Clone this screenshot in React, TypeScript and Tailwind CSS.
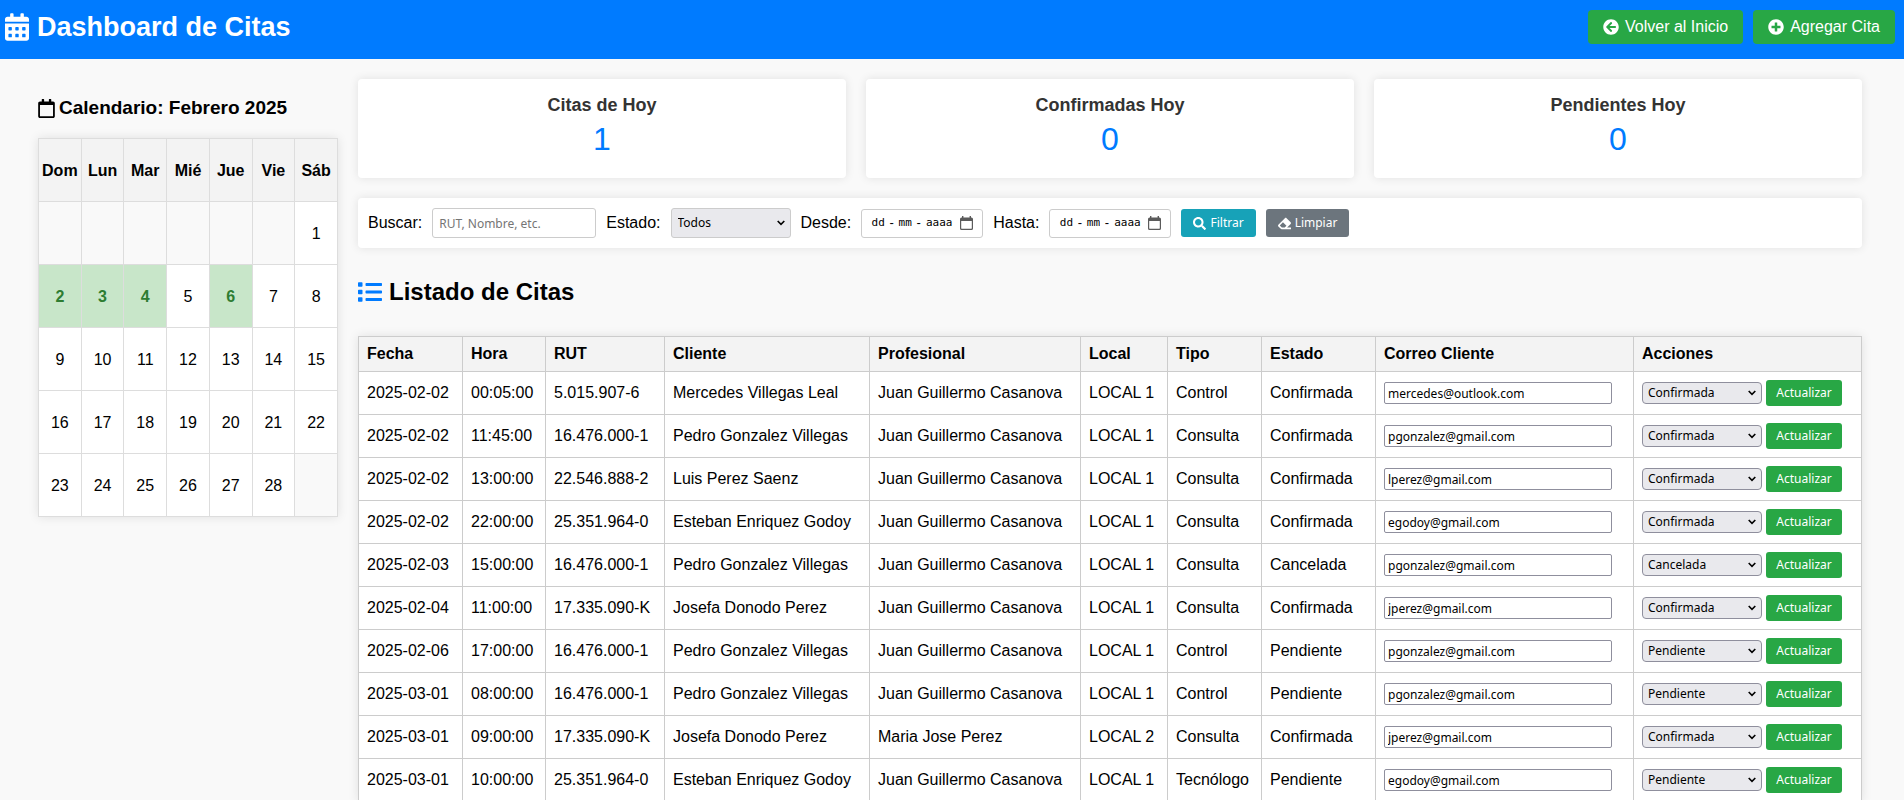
import { useId } from "react";
import {
  FaArrowCircleLeft,
  FaCalendarAlt,
  FaEraser,
  FaList,
  FaPlusCircle,
  FaRegCalendar,
  FaSearch,
} from "react-icons/fa";

type Cita = {
  fecha: string;
  hora: string;
  rut: string;
  cliente: string;
  profesional: string;
  local: string;
  tipo: string;
  estado: string;
  correo: string;
};

const JUAN = "Juan Guillermo Casanova";

const citas: Cita[] = [
  { fecha: "2025-02-02", hora: "00:05:00", rut: "5.015.907-6", cliente: "Mercedes Villegas Leal", profesional: JUAN, local: "LOCAL 1", tipo: "Control", estado: "Confirmada", correo: "mercedes@outlook.com" },
  { fecha: "2025-02-02", hora: "11:45:00", rut: "16.476.000-1", cliente: "Pedro Gonzalez Villegas", profesional: JUAN, local: "LOCAL 1", tipo: "Consulta", estado: "Confirmada", correo: "pgonzalez@gmail.com" },
  { fecha: "2025-02-02", hora: "13:00:00", rut: "22.546.888-2", cliente: "Luis Perez Saenz", profesional: JUAN, local: "LOCAL 1", tipo: "Consulta", estado: "Confirmada", correo: "lperez@gmail.com" },
  { fecha: "2025-02-02", hora: "22:00:00", rut: "25.351.964-0", cliente: "Esteban Enriquez Godoy", profesional: JUAN, local: "LOCAL 1", tipo: "Consulta", estado: "Confirmada", correo: "egodoy@gmail.com" },
  { fecha: "2025-02-03", hora: "15:00:00", rut: "16.476.000-1", cliente: "Pedro Gonzalez Villegas", profesional: JUAN, local: "LOCAL 1", tipo: "Consulta", estado: "Cancelada", correo: "pgonzalez@gmail.com" },
  { fecha: "2025-02-04", hora: "11:00:00", rut: "17.335.090-K", cliente: "Josefa Donodo Perez", profesional: JUAN, local: "LOCAL 1", tipo: "Consulta", estado: "Confirmada", correo: "jperez@gmail.com" },
  { fecha: "2025-02-06", hora: "17:00:00", rut: "16.476.000-1", cliente: "Pedro Gonzalez Villegas", profesional: JUAN, local: "LOCAL 1", tipo: "Control", estado: "Pendiente", correo: "pgonzalez@gmail.com" },
  { fecha: "2025-03-01", hora: "08:00:00", rut: "16.476.000-1", cliente: "Pedro Gonzalez Villegas", profesional: JUAN, local: "LOCAL 1", tipo: "Control", estado: "Pendiente", correo: "pgonzalez@gmail.com" },
  { fecha: "2025-03-01", hora: "09:00:00", rut: "17.335.090-K", cliente: "Josefa Donodo Perez", profesional: "Maria Jose Perez", local: "LOCAL 2", tipo: "Consulta", estado: "Confirmada", correo: "jperez@gmail.com" },
  { fecha: "2025-03-01", hora: "10:00:00", rut: "25.351.964-0", cliente: "Esteban Enriquez Godoy", profesional: JUAN, local: "LOCAL 1", tipo: "Tecnólogo", estado: "Pendiente", correo: "egodoy@gmail.com" },
];

const columnas = [
  { titulo: "Fecha", ancho: "w-[104px]" },
  { titulo: "Hora", ancho: "w-[83px]" },
  { titulo: "RUT", ancho: "w-[119px]" },
  { titulo: "Cliente", ancho: "w-[205px]" },
  { titulo: "Profesional", ancho: "w-[211px]" },
  { titulo: "Local", ancho: "w-[87px]" },
  { titulo: "Tipo", ancho: "w-[94px]" },
  { titulo: "Estado", ancho: "w-[114px]" },
  { titulo: "Correo Cliente", ancho: "w-[258px]" },
  { titulo: "Acciones", ancho: "w-[228px]" },
];

const diasSemana = ["Dom", "Lun", "Mar", "Mié", "Jue", "Vie", "Sáb"];
const semanas: (number | null)[][] = [
  [null, null, null, null, null, null, 1],
  [2, 3, 4, 5, 6, 7, 8],
  [9, 10, 11, 12, 13, 14, 15],
  [16, 17, 18, 19, 20, 21, 22],
  [23, 24, 25, 26, 27, 28, null],
];
const diasConCita = new Set([2, 3, 4, 6]);

const estados = ["Pendiente", "Confirmada", "Cancelada"];

function claseDia(dia: number | null) {
  if (dia === null) return "bg-[#f9f9f9]";
  if (diasConCita.has(dia)) return "bg-[#c8e6c9] font-bold text-[#2e7d32]";
  return "bg-white";
}

function Flecha() {
  return (
    <svg viewBox="0 0 8 6" className="pointer-events-none absolute top-1/2 right-[6px] h-[6px] w-2 -translate-y-1/2" fill="none" stroke="black" strokeWidth="1.6">
      <path d="M0.7 1 L4 4.4 L7.3 1" />
    </svg>
  );
}

function Calendario() {
  return (
    <aside className="w-[300px] shrink-0">
      <h3 className="mt-[18px] mb-[19px] flex items-center gap-1 text-[19px] leading-[22px] font-bold">
        <FaRegCalendar className="h-[19px] w-[17px]" />
        Calendario: Febrero 2025
      </h3>
      <table className="w-full table-fixed border-collapse text-center shadow-[0_0_10px_rgba(0,0,0,0.1)]">
        <thead>
          <tr className="h-[63px] bg-[#f3f3f3]">
            {diasSemana.map((d) => (
              <th key={d} className="border border-[#ddd] px-0 pt-0.5 pb-0">{d}</th>
            ))}
          </tr>
        </thead>
        <tbody>
          {semanas.map((semana, i) => (
            <tr key={i} className="h-[63px]">
              {semana.map((dia, j) => (
                <td key={j} className={`border border-[#ddd] px-0 pt-0.5 pb-0 ${claseDia(dia)}`}>{dia}</td>
              ))}
            </tr>
          ))}
        </tbody>
      </table>
    </aside>
  );
}

function Resumen({ titulo, valor }: { titulo: string; valor: number }) {
  return (
    <div className="flex-1 rounded-[4px] bg-white pt-[15px] pb-[20px] text-center shadow-[0_0_10px_rgba(0,0,0,0.1)]">
      <h3 className="text-[18px] leading-[22px] font-bold text-[#333]">{titulo}</h3>
      <p className="mt-[5px] text-[32px] leading-[37px] text-[#007bff]">{valor}</p>
    </div>
  );
}

const parteFecha =
  "p-0 text-center font-['DejaVu_Sans_Mono',monospace] text-[11px] text-black outline-none placeholder:text-black";

function CampoFecha({ etiqueta }: { etiqueta: string }) {
  const id = useId();
  return (
    <>
      <label htmlFor={id}>{etiqueta}</label>
      <div className="flex h-[29px] items-center gap-1 rounded-[3px] border border-[#ccc] bg-white px-[9px]">
        <input id={id} placeholder="dd" className={`w-[14px] ${parteFecha}`} />
        <span className="w-[5px] text-center text-[13px]">-</span>
        <input aria-label={`${etiqueta} mes`} placeholder="mm" className={`w-[14px] ${parteFecha}`} />
        <span className="w-[5px] text-center text-[13px]">-</span>
        <input aria-label={`${etiqueta} año`} placeholder="aaaa" className={`w-[28px] ${parteFecha}`} />
        <button type="button" aria-label={`${etiqueta} abrir calendario`} className="ml-[3px]">
          <svg viewBox="0 0 13 14" className="block h-[14px] w-[13px]" fill="#5b5b5b">
            <path fillRule="evenodd" d="M2 0h1.400v1.400h6.200V0H11v1.400h.4A1.600 1.600 0 0 1 13 3v9.400a1.600 1.600 0 0 1-1.600 1.600H1.600A1.600 1.600 0 0 1 0 12.400V3a1.600 1.600 0 0 1 1.600-1.600H2zM1.200 5v7.200c0 .3.200.5.500.5h9.600c.3 0 .5-.2.5-.5V5z" />
          </svg>
        </button>
      </div>
    </>
  );
}

const botonFiltro =
  "flex h-7 items-center gap-1 rounded-[3px] px-3 font-['Noto_Sans',sans-serif] text-[12px] text-white";

function Filtros() {
  return (
    <form className="mt-5 flex flex-wrap items-center gap-[10px] rounded-[4px] bg-white p-[10px] shadow-[0_0_10px_rgba(0,0,0,0.1)]">
      <label htmlFor="buscar">Buscar:</label>
      <input
        id="buscar"
        placeholder="RUT, Nombre, etc."
        className="h-[30px] w-[164px] rounded-[3px] border border-[#ccc] bg-white px-[6px] font-['Noto_Sans',sans-serif] text-[12px] placeholder:text-[#757575]"
      />
      <label htmlFor="estado">Estado:</label>
      <div className="relative">
        <select id="estado" className="block h-[30px] w-[120px] appearance-none rounded-[3px] border border-[#ccc] bg-[#e9e9ed] px-[6px] font-['Noto_Sans',sans-serif] text-[12px]">
          <option>Todos</option>
          {estados.map((e) => (
            <option key={e}>{e}</option>
          ))}
        </select>
        <Flecha />
      </div>
      <CampoFecha etiqueta="Desde:" />
      <CampoFecha etiqueta="Hasta:" />
      <button type="button" className={`bg-[#17a2b8] ${botonFiltro}`}>
        <FaSearch className="size-[13px]" />
        Filtrar
      </button>
      <button type="button" className={`bg-[#6c757d] ${botonFiltro}`}>
        <FaEraser className="size-[13px]" />
        Limpiar
      </button>
    </form>
  );
}

function TablaCitas() {
  return (
    <table className="mt-[31px] w-full table-fixed border-collapse bg-white text-left shadow-[0_0_10px_rgba(0,0,0,0.1)]">
      <thead>
        <tr className="h-[35px] bg-[#f3f3f3]">
          {columnas.map((c) => (
            <th key={c.titulo} className={`border border-[#ccc] px-2 py-0 ${c.ancho}`}>{c.titulo}</th>
          ))}
        </tr>
      </thead>
      <tbody>
        {citas.map((c, i) => (
          <tr key={i} className="h-[43px] whitespace-nowrap [&>td]:border [&>td]:border-[#ccc] [&>td]:px-2 [&>td]:py-0">
            <td>{c.fecha}</td>
            <td>{c.hora}</td>
            <td>{c.rut}</td>
            <td>{c.cliente}</td>
            <td>{c.profesional}</td>
            <td>{c.local}</td>
            <td>{c.tipo}</td>
            <td>{c.estado}</td>
            <td>
              <input
                type="email"
                aria-label={`Correo de ${c.cliente}`}
                defaultValue={c.correo}
                className="block h-[22px] w-[228px] rounded-[2px] border border-[#8f8f9d] bg-white px-[3px] font-['Noto_Sans',sans-serif] text-[12px]"
              />
            </td>
            <td>
              <div className="flex items-center gap-1">
                <div className="relative">
                  <select
                    aria-label={`Estado de ${c.cliente}`}
                    defaultValue={c.estado}
                    className="block h-[22px] w-[120px] appearance-none rounded-[4px] border border-[#8f8f9d] bg-[#e9e9ed] px-[5px] font-['Noto_Sans',sans-serif] text-[12px]"
                  >
                    {estados.map((e) => (
                      <option key={e}>{e}</option>
                    ))}
                  </select>
                  <Flecha />
                </div>
                <button type="button" className="h-[26px] w-[76px] rounded-[3px] bg-[#28a745] font-['Noto_Sans',sans-serif] text-[12px] text-white">
                  Actualizar
                </button>
              </div>
            </td>
          </tr>
        ))}
      </tbody>
    </table>
  );
}

const enlaceCabecera = "flex h-[34px] items-center gap-[6px] rounded-[4px] bg-[#28a745] px-[15px] text-white";

export default function App() {
  return (
    <div className="min-h-screen bg-[#f9f9f9] font-['Liberation_Sans',Arial,sans-serif] text-base leading-[18px] text-black">
      <header className="flex items-center justify-between bg-[#007bff] pt-[10px] pr-[9px] pb-[15px] pl-[5px] text-white">
        <h1 className="flex items-center gap-2 text-[27px] leading-[34px] font-bold">
          <FaCalendarAlt className="h-[28px] w-[24px]" />
          Dashboard de Citas
        </h1>
        <nav className="flex gap-[10px]">
          <a href="#inicio" className={enlaceCabecera}>
            <FaArrowCircleLeft />
            Volver al Inicio
          </a>
          <a href="#agregar" className={enlaceCabecera}>
            <FaPlusCircle />
            Agregar Cita
          </a>
        </nav>
      </header>
      <div className="flex items-start gap-5 pt-5 pr-[42px] pl-[38px]">
        <Calendario />
        <main className="min-w-0 flex-1">
          <section className="flex gap-5">
            <Resumen titulo="Citas de Hoy" valor={1} />
            <Resumen titulo="Confirmadas Hoy" valor={0} />
            <Resumen titulo="Pendientes Hoy" valor={0} />
          </section>
          <Filtros />
          <h2 className="mt-[30px] flex items-center gap-[7px] text-[24px] leading-[27px] font-bold">
            <FaList className="text-[#007bff]" />
            Listado de Citas
          </h2>
          <TablaCitas />
        </main>
      </div>
    </div>
  );
}
